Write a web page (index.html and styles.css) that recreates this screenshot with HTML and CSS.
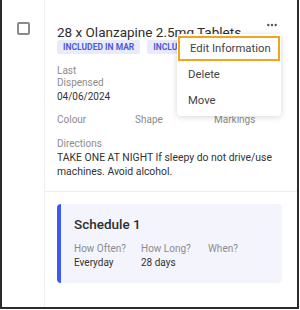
FILE: index.html
```html
<!DOCTYPE html>
<html>
<head>
<meta charset="utf-8">
<link rel="stylesheet" href="styles.css">
</head>
<body>
<div class="frame">
  <div class="check-col">
    <span class="checkbox"></span>
  </div>
  <div class="content">
    <div class="item">
      <div class="title-row">
        <h1 class="title">28 x Olanzapine 2.5mg Tablets</h1>
        <svg class="more" width="10" height="4" viewBox="0 0 10 4"><circle cx="1.3" cy="2" r="1.2" fill="#555"/><circle cx="5" cy="2" r="1.2" fill="#555"/><circle cx="8.7" cy="2" r="1.2" fill="#555"/></svg>
      </div>
      <div class="badges">
        <span class="badge">INCLUDED IN MAR</span>
        <span class="badge">INCLUDED IN MAR</span>
      </div>
      <div class="dispensed">
        <div class="label">Last<br>Dispensed</div>
        <div class="value">04/06/2024</div>
      </div>
      <div class="attrs">
        <div class="label">Colour</div>
        <div class="label">Shape</div>
        <div class="label">Markings</div>
      </div>
      <div class="directions">
        <div class="label">Directions</div>
        <div class="value">TAKE ONE AT NIGHT If sleepy do not drive/use machines. Avoid alcohol.</div>
      </div>
      <ul class="menu">
        <li class="menu-item active">Edit Information</li>
        <li class="menu-item">Delete</li>
        <li class="menu-item">Move</li>
      </ul>
    </div>
    <div class="schedule">
      <div class="schedule-title">Schedule 1</div>
      <div class="schedule-grid">
        <div class="label">How Often?</div>
        <div class="label">How Long?</div>
        <div class="label">When?</div>
        <div class="value">Everyday</div>
        <div class="value">28 days</div>
        <div class="value"></div>
      </div>
    </div>
  </div>
</div>
</body>
</html>
```
FILE: styles.css
```css
* { box-sizing: border-box; }
html, body { margin: 0; padding: 0; background: #fff; }
body { font-family: Roboto, "Noto Sans", sans-serif; color: #333; }

.frame {
  width: 299px;
  height: 309px;
  border-left: 2px solid #2b2b2b;
  border-right: 2px solid #2b2b2b;
  border-bottom: 2px solid #2b2b2b;
  display: grid;
  grid-template-columns: 43px 1fr;
  overflow: hidden;
}

.check-col {
  border-right: 1px solid #efefef;
  padding: 22px 0 0 15px;
}
.checkbox {
  display: block;
  width: 13px;
  height: 13px;
  border: 2px solid #8a8a8a;
  border-radius: 2px;
}

.content {
  display: flex;
  flex-direction: column;
}

.item {
  position: relative;
  padding: 23px 0 12px 12px;
  border-bottom: 1px solid #eeeeee;
}

.title-row {
  display: flex;
  align-items: flex-start;
  justify-content: space-between;
}
.title {
  margin: 0;
  font-size: 13.5px;
  font-weight: 400;
  line-height: 18px;
  color: #2e2e2e;
  white-space: nowrap;
}
.more {
  display: block;
  margin: 0 20px 0 0;
}

.badges {
  display: flex;
  gap: 7px;
  margin-top: -1px;
  white-space: nowrap;
}
.badge {
  background: #e9ebfb;
  color: #4c5cd8;
  font-size: 8.5px;
  font-weight: 700;
  padding: 2px 6px;
  line-height: 10px;
  border-radius: 2px;
}

.label {
  font-size: 10px;
  line-height: 12px;
  color: #8c8c8c;
}
.value {
  font-size: 10px;
  line-height: 14px;
  color: #333;
}

.dispensed { margin-top: 11px; }
.dispensed .value { margin-top: 1px; }

.attrs {
  display: grid;
  grid-template-columns: 78px 79px 1fr;
  margin-top: 10px;
}

.directions { margin-top: 12px; }
.directions .value { margin-top: 1px; padding-right: 20px; font-size: 10.4px; }

.menu {
  position: absolute;
  left: 132px;
  top: 34px;
  width: 104px;
  margin: 0;
  padding: 2px 0;
  list-style: none;
  background: #fff;
  border-radius: 4px;
  box-shadow: 0 1px 6px rgba(0,0,0,0.16);
}
.menu-item {
  font-size: 11.3px;
  line-height: 26px;
  height: 26px;
  padding: 0 11px;
  color: #444;
  white-space: nowrap;
}
.menu-item.active {
  border: 2px solid #f2a51c;
  line-height: 21px;
  height: 25px;
  padding: 0 10px;
  margin: 0 1px 1px;
}

.schedule {
  margin: 12px 15px 0 12px;
  background: #f3f4fc;
  border-left: 4px solid #3b5bf0;
  border-radius: 4px;
  padding: 11px 12px 13px 13px;
}
.schedule-title {
  font-size: 13.5px;
  font-weight: 500;
  line-height: 18px;
  color: #2e2e2e;
}
.schedule-grid {
  display: grid;
  grid-template-columns: 67px 67px 1fr;
  margin-top: 10px;
}
.schedule-grid .value { margin-top: 1px; }
```
